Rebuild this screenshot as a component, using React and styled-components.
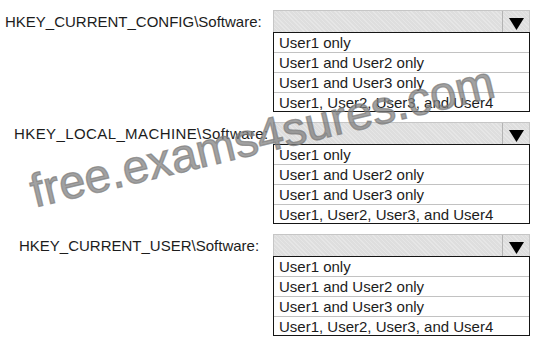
import React from 'react'
import styled, { createGlobalStyle } from 'styled-components'

const GlobalStyle = createGlobalStyle`
  html, body {
    background: #ffffff;
    margin: 0;
    padding: 0;
  }
  body {
    color: #1c1c1c;
    font-family: "Liberation Sans", Arial, sans-serif;
    font-size: 15px;
  }
`

const Page = styled.div`
  display: flex;
  flex-direction: column;
  gap: 10px;
  height: 345px;
  overflow: hidden;
  padding-top: 10px;
  position: relative;
  width: 534px;
  box-sizing: border-box;
`

const Group = styled.div`
  display: grid;
  grid-template-columns: 273px 257px;
`

const Label = styled.div`
  align-self: center;
  grid-column: 1;
  grid-row: 1;
  letter-spacing: ${p => p.$spacing || 0}px;
  padding-left: ${p => p.$indent}px;
  white-space: nowrap;
`

const Select = styled.div`
  background-color: #dedede;
  background-image: repeating-linear-gradient(45deg, rgba(255,255,255,0.25) 0 1px, transparent 1px 3px);
  border: 1px solid #c6c6c6;
  border-bottom: none;
  box-sizing: border-box;
  display: flex;
  grid-column: 2;
  grid-row: 1;
  height: 22px;
`

const Field = styled.div`
  flex: 1;
`

const ArrowButton = styled.div`
  border-left: 1px solid #b4b4b4;
  box-sizing: border-box;
  display: flex;
  justify-content: center;
  padding-top: 7px;
  width: 27px;
`

const List = styled.div`
  border: 1px solid #151515;
  display: flex;
  flex-direction: column;
  grid-column: 2;
  grid-row: 2;
`

const Option = styled.div`
  box-sizing: border-box;
  height: 19px;
  line-height: 19px;
  padding-left: 5px;
  white-space: nowrap;

  & + & {
    border-top: 1px solid #c2c2c2;
  }

  &:nth-child(2), &:nth-child(3) {
    height: 20px;
    line-height: 20px;
  }
`

const Watermark = styled.div`
  -webkit-text-stroke: 1.3px rgba(125, 125, 125, 0.72);
  color: rgba(125, 125, 125, 0.72);
  font-family: "Liberation Sans", Arial, sans-serif;
  font-size: 47px;
  left: 262px;
  pointer-events: none;
  position: absolute;
  top: 136px;
  transform: translate(-50%, -50%) rotate(-13.5deg);
  white-space: nowrap;
`

const options = [
  'User1 only',
  'User1 and User2 only',
  'User1 and User3 only',
  'User1, User2, User3, and User4',
]

const keys = [
  { name: 'HKEY_CURRENT_CONFIG\\Software:', indent: 5 },
  { name: 'HKEY_LOCAL_MACHINE\\Software:', indent: 14, spacing: 0.4 },
  { name: 'HKEY_CURRENT_USER\\Software:', indent: 19 },
]

function Arrow() {
  return (
    <svg width="15" height="12" viewBox="0 0 15 12">
      <polygon points="0,0 15,0 7.5,12" fill="#000" />
    </svg>
  )
}

function Dropdown({ name, indent, spacing }) {
  return (
    <Group>
      <Label $indent={indent} $spacing={spacing}>{name}</Label>
      <Select>
        <Field />
        <ArrowButton><Arrow /></ArrowButton>
      </Select>
      <List>
        {options.map(o => <Option key={o}>{o}</Option>)}
      </List>
    </Group>
  )
}

export default function App() {
  return (
    <>
      <GlobalStyle />
      <Page>
        {keys.map(k => <Dropdown key={k.name} {...k} />)}
        <Watermark>free.exams4sures.com</Watermark>
      </Page>
    </>
  )
}
